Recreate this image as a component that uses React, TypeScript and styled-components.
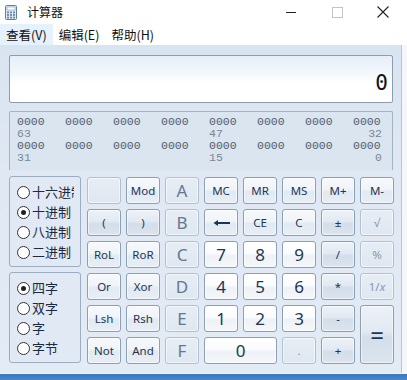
import React from 'react';
import styled, { createGlobalStyle, css } from 'styled-components';

const GlobalStyle = createGlobalStyle`
  html, body { margin: 0; padding: 0; background: #ffffff; }
  body { width: 407px; height: 380px; overflow: hidden; font-family: "Noto Sans", "Noto Sans CJK SC", sans-serif; }
`;

type Variant = 'fn' | 'num' | 'op' | 'hex' | 'off';

type Key = { label: React.ReactNode; variant: Variant; wide?: boolean; tall?: boolean };

const BackArrow = () => (
  <svg width="17" height="8" viewBox="0 0 17 8">
    <path d="M5 1 L0.5 4 L5 7 Z" fill="#1f3553" />
    <rect x="4" y="3" width="13" height="2" fill="#1f3553" />
  </svg>
);

const keys: Key[] = [
  { label: '', variant: 'off' },
  { label: 'Mod', variant: 'fn' },
  { label: 'A', variant: 'hex' },
  { label: 'MC', variant: 'fn' },
  { label: 'MR', variant: 'fn' },
  { label: 'MS', variant: 'fn' },
  { label: 'M+', variant: 'fn' },
  { label: 'M-', variant: 'fn' },

  { label: '(', variant: 'op' },
  { label: ')', variant: 'op' },
  { label: 'B', variant: 'hex' },
  { label: <BackArrow />, variant: 'fn' },
  { label: 'CE', variant: 'fn' },
  { label: 'C', variant: 'fn' },
  { label: '±', variant: 'op' },
  { label: '√', variant: 'off' },

  { label: 'RoL', variant: 'fn' },
  { label: 'RoR', variant: 'fn' },
  { label: 'C', variant: 'hex' },
  { label: '7', variant: 'num' },
  { label: '8', variant: 'num' },
  { label: '9', variant: 'num' },
  { label: '/', variant: 'op' },
  { label: '%', variant: 'off' },

  { label: 'Or', variant: 'fn' },
  { label: 'Xor', variant: 'fn' },
  { label: 'D', variant: 'hex' },
  { label: '4', variant: 'num' },
  { label: '5', variant: 'num' },
  { label: '6', variant: 'num' },
  { label: '*', variant: 'op' },
  { label: <span>1/<i>x</i></span>, variant: 'off' },

  { label: 'Lsh', variant: 'fn' },
  { label: 'Rsh', variant: 'fn' },
  { label: 'E', variant: 'hex' },
  { label: '1', variant: 'num' },
  { label: '2', variant: 'num' },
  { label: '3', variant: 'num' },
  { label: '-', variant: 'op' },
  { label: '=', variant: 'op', tall: true },

  { label: 'Not', variant: 'fn' },
  { label: 'And', variant: 'fn' },
  { label: 'F', variant: 'hex' },
  { label: '0', variant: 'num', wide: true },
  { label: '.', variant: 'off' },
  { label: '+', variant: 'op' },
];

const bases = [
  { label: '十六进制', on: false },
  { label: '十进制', on: true },
  { label: '八进制', on: false },
  { label: '二进制', on: false },
];

const sizes = [
  { label: '四字', on: true },
  { label: '双字', on: false },
  { label: '字', on: false },
  { label: '字节', on: false },
];

export default function App() {
  return (
    <Window>
      <GlobalStyle />
      <TitleBar>
        <AppIcon>
          <svg width="12" height="15" viewBox="0 0 12 15">
            <rect x="0.5" y="0.5" width="11" height="14" rx="1" fill="#dfe8f2" stroke="#5f7f9f" />
            <rect x="2" y="2" width="8" height="3" fill="#ffffff" stroke="#7f9bb8" strokeWidth="0.6" />
            {[0, 1, 2].map((r) =>
              [0, 1, 2].map((c) => (
                <rect key={`${r}-${c}`} x={2 + c * 3} y={6.5 + r * 2.6} width="2" height="1.8" fill="#6d8bab" />
              )),
            )}
          </svg>
        </AppIcon>
        <TitleText>计算器</TitleText>
        <WindowControls>
          <ControlSlot>
            <svg width="11" height="11" viewBox="0 0 11 11">
              <rect x="0" y="5" width="10" height="1" fill="#222" />
            </svg>
          </ControlSlot>
          <ControlSlot>
            <svg width="11" height="11" viewBox="0 0 11 11">
              <rect x="0.5" y="0.5" width="10" height="10" fill="none" stroke="#c4c4c4" />
            </svg>
          </ControlSlot>
          <ControlSlot>
            <svg width="12" height="12" viewBox="0 0 12 12">
              <path d="M0.5 0.5 L11.5 11.5 M11.5 0.5 L0.5 11.5" stroke="#222" strokeWidth="1.1" />
            </svg>
          </ControlSlot>
        </WindowControls>
      </TitleBar>

      <MenuBar>
        <MenuItem $active>查看(V)</MenuItem>
        <MenuItem>编辑(E)</MenuItem>
        <MenuItem>帮助(H)</MenuItem>
      </MenuBar>

      <Body>
        <Client>
          <Display>
            <DisplayValue>0</DisplayValue>
          </Display>

          <BitPanel>
            {Array.from({ length: 8 }).map((_, i) => (
              <Nibble key={`a${i}`}>0000</Nibble>
            ))}
            <BitIndex $col={1}>63</BitIndex>
            <BitIndex $col={5}>47</BitIndex>
            <BitIndex $col={8} $end>32</BitIndex>
            {Array.from({ length: 8 }).map((_, i) => (
              <Nibble key={`b${i}`}>0000</Nibble>
            ))}
            <BitIndex $col={1}>31</BitIndex>
            <BitIndex $col={5}>15</BitIndex>
            <BitIndex $col={8} $end>0</BitIndex>
          </BitPanel>

          <Keypad>
            <Groups>
              <GroupBox>
                {bases.map((b) => (
                  <RadioRow key={b.label}>
                    <Radio $on={b.on} />
                    <RadioLabel>{b.label}</RadioLabel>
                  </RadioRow>
                ))}
              </GroupBox>
              <GroupBox>
                {sizes.map((s) => (
                  <RadioRow key={s.label}>
                    <Radio $on={s.on} />
                    <RadioLabel>{s.label}</RadioLabel>
                  </RadioRow>
                ))}
              </GroupBox>
            </Groups>

            <KeyGrid>
              {keys.map((k, i) => (
                <KeyButton key={i} $variant={k.variant} $wide={k.wide} $tall={k.tall}>
                  {k.label}
                </KeyButton>
              ))}
            </KeyGrid>
          </Keypad>
        </Client>
        <RightEdge />
      </Body>

      <BottomLine />
      <Desktop />
    </Window>
  );
}

const Window = styled.div`
  width: 407px;
  height: 380px;
  display: flex;
  flex-direction: column;
  background: #ffffff;
`;

const TitleBar = styled.div`
  height: 24px;
  display: flex;
  align-items: center;
  background: #ffffff;
`;

const AppIcon = styled.div`
  width: 12px;
  height: 15px;
  margin-left: 5px;
  display: flex;
`;

const TitleText = styled.div`
  margin-left: 10px;
  font-family: "Noto Sans CJK SC", sans-serif;
  font-size: 12px;
  color: #111;
  line-height: 1.2;
`;

const WindowControls = styled.div`
  margin-left: auto;
  display: flex;
  align-items: center;
  padding-right: 1px;
`;

const ControlSlot = styled.div`
  width: 46px;
  height: 24px;
  display: flex;
  align-items: center;
  justify-content: center;
`;

const MenuBar = styled.div`
  height: 21px;
  display: flex;
  background: #ffffff;
`;

const MenuItem = styled.div<{ $active?: boolean }>`
  padding: 0 6px;
  display: flex;
  align-items: center;
  font-family: "Noto Sans CJK SC", sans-serif;
  font-size: 12.5px;
  color: #111;
  ${(p) =>
    p.$active &&
    css`
      background: #e5f1fb;
    `}
`;

const Body = styled.div`
  display: flex;
`;

const Client = styled.div`
  width: 402px;
  height: 328px;
  box-sizing: border-box;
  padding: 10px 8px 0 9px;
  display: flex;
  flex-direction: column;
  background: linear-gradient(180deg, #d9e4f1 0%, #dfe8f3 40%, #e3ebf5 100%);
  border-right: 1px solid #b9c6d5;
`;

const RightEdge = styled.div`
  flex: 1;
  background: #f4f6f9;
`;

const Display = styled.div`
  height: 48px;
  box-sizing: border-box;
  border: 1px solid #8d9db0;
  border-radius: 2px;
  background: linear-gradient(180deg, #e6eef7 0%, #f3f7fb 35%, #ffffff 60%, #ffffff 100%);
  display: flex;
  align-items: flex-end;
  justify-content: flex-end;
  padding: 0 4px 8px 0;
`;

const DisplayValue = styled.div`
  font-family: "DejaVu Sans Mono", "Liberation Mono", monospace;
  font-size: 21px;
  line-height: 1;
  color: #111;
`;

const BitPanel = styled.div`
  margin-top: 8px;
  height: 59px;
  box-sizing: border-box;
  border: 1px solid #a3b3c6;
  border-bottom: none;
  border-radius: 2px 2px 0 0;
  background: #dbe5f0;
  padding: 4px 0 0 7px;
  display: grid;
  grid-template-columns: repeat(7, 48px) 29px;
  grid-auto-rows: 12px;
  font-family: "Liberation Mono", "DejaVu Sans Mono", monospace;
  font-size: 11.5px;
  line-height: 12px;
`;

const Nibble = styled.span`
  color: #4f5c6d;
`;

const BitIndex = styled.span<{ $col: number; $end?: boolean }>`
  grid-column: ${(p) => p.$col};
  justify-self: ${(p) => (p.$end ? 'end' : 'start')};
  color: #7a8696;
`;

const Keypad = styled.div`
  margin-top: 6px;
  display: flex;
  gap: 6px;
`;

const Groups = styled.div`
  width: 72px;
  display: flex;
  flex-direction: column;
  gap: 5px;
`;

const GroupBox = styled.div`
  height: 91px;
  box-sizing: border-box;
  border: 1px solid #9badc1;
  border-radius: 3px;
  background: #e1e9f4;
  padding: 5px 6px 0 7px;
  display: flex;
  flex-direction: column;
`;

const RadioRow = styled.div`
  height: 20px;
  display: flex;
  align-items: center;
  gap: 2px;
  overflow: hidden;
`;

const Radio = styled.span<{ $on?: boolean }>`
  flex: none;
  width: 13px;
  height: 13px;
  box-sizing: border-box;
  border: 1px solid #333;
  border-radius: 50%;
  background: #ffffff;
  display: flex;
  align-items: center;
  justify-content: center;
  &::after {
    content: '';
    width: 5px;
    height: 5px;
    border-radius: 50%;
    background: ${(p) => (p.$on ? '#222' : 'transparent')};
  }
`;

const RadioLabel = styled.span`
  font-family: "Noto Sans CJK SC", sans-serif;
  font-size: 13px;
  color: #1b2a40;
  white-space: nowrap;
  overflow: hidden;
  line-height: 18px;
`;

const KeyGrid = styled.div`
  margin-top: 1px;
  display: grid;
  grid-template-columns: repeat(8, 34px);
  grid-template-rows: repeat(6, 27px);
  gap: 5px;
`;

const faces: Record<Variant, ReturnType<typeof css>> = {
  fn: css`
    background: linear-gradient(180deg, #f7f9fc 0%, #eff4f9 45%, #e1e9f2 55%, #e8eef6 100%);
    border-color: #8c9fb6;
    color: #1f3553;
    font-size: 11.5px;
  `,
  num: css`
    background: linear-gradient(180deg, #ffffff 0%, #f9fbfd 45%, #eef2f7 55%, #f4f7fa 100%);
    border-color: #8c9fb6;
    color: #1f3553;
    font-size: 17px;
  `,
  op: css`
    background: linear-gradient(180deg, #edf2f8 0%, #e2e9f2 45%, #d3deea 55%, #dbe4ee 100%);
    border-color: #8c9fb6;
    color: #1f3553;
    font-size: 11.5px;
  `,
  hex: css`
    background: linear-gradient(180deg, #e6edf5 0%, #dfe7f1 100%);
    border-color: #b2c1d2;
    color: #64778e;
    font-size: 17px;
  `,
  off: css`
    background: linear-gradient(180deg, #e6edf5 0%, #dfe7f1 100%);
    border-color: #b2c1d2;
    color: #8797ab;
    font-size: 11.5px;
  `,
};

const KeyButton = styled.div<{ $variant: Variant; $wide?: boolean; $tall?: boolean }>`
  box-sizing: border-box;
  border: 1px solid;
  border-radius: 3px;
  display: flex;
  align-items: center;
  justify-content: center;
  font-family: "Noto Sans", "Open Sans", sans-serif;
  line-height: 1;
  box-shadow: inset 0 0 0 1px rgba(255, 255, 255, 0.55);
  ${(p) => faces[p.$variant]}
  ${(p) =>
    p.$wide &&
    css`
      grid-column: span 2;
    `}
  ${(p) =>
    p.$tall &&
    css`
      grid-row: span 2;
      font-size: 24px;
    `}
`;

const BottomLine = styled.div`
  height: 1px;
  background: #f1f5f9;
`;

const Desktop = styled.div`
  flex: 1;
  background: linear-gradient(180deg, #3a78ba 0%, #4a88cc 100%);
`;
